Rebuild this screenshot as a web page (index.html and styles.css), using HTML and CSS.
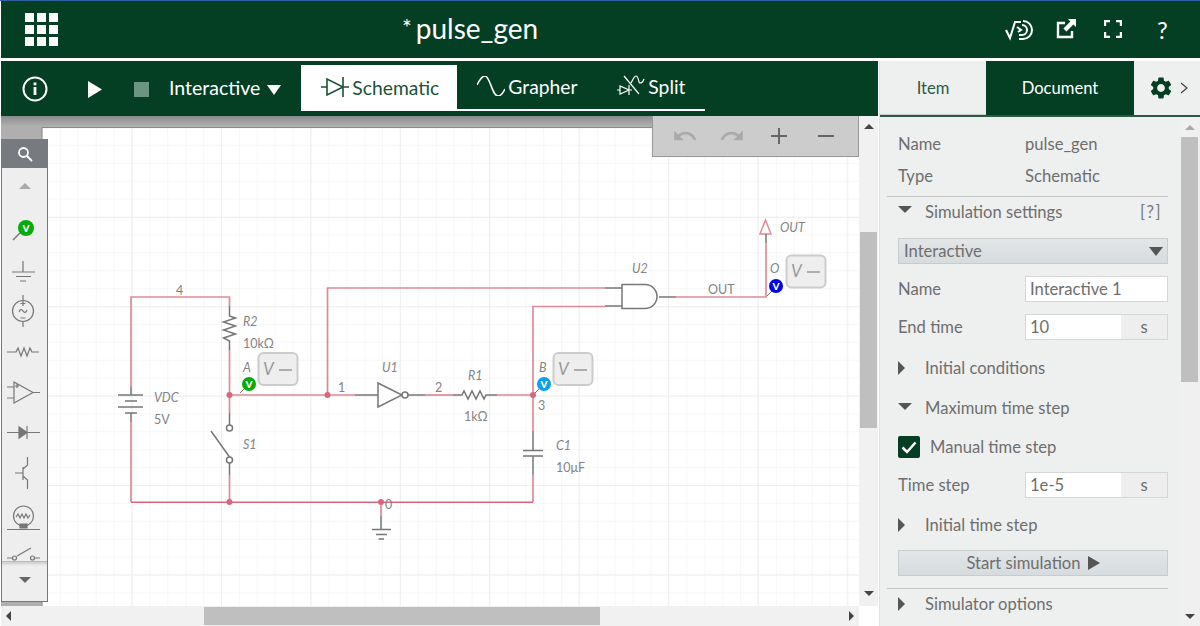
FILE: index.html
```html
<!DOCTYPE html>
<html lang="en">
<head>
  <meta charset="UTF-8">
  <title>pulse_gen</title>
  <link rel="stylesheet" href="styles.css">
</head>
<body>
  <header class="header">
    <div class="apps">
      <i></i><i></i><i></i><i></i><i></i><i></i><i></i><i></i><i></i>
    </div>
    <div class="title"><span class="star">*</span>pulse_gen</div>
    <div class="header-icons">
      <svg class="ico-sim" width="28" height="22" viewBox="0 0 28 22" fill="none" stroke="#fff" stroke-width="2">
        <path d="M1 11l4 8 5-16h6"/>
        <path d="M18 2a9 9 0 1 1 0 18h-4"/>
        <path d="M17 6a5 5 0 1 1 0 10h-3"/>
        <path d="M12 8l4 3-3 2"/>
      </svg>
      <svg class="ico-export" width="20" height="20" viewBox="0 0 20 20" fill="none">
        <path d="M9 4H2v14h14v-6" stroke="#fff" stroke-width="2.4"/>
        <path d="M12 0h8v8l-2.6-2.6-7 7-3-3 7-7z" fill="#fff"/>
      </svg>
      <svg class="ico-full" width="18" height="18" viewBox="0 0 18 18" fill="none" stroke="#fff" stroke-width="2.4">
        <path d="M1 6V1h5M12 1h5v5M17 12v5h-5M6 17H1v-5"/>
      </svg>
      <span class="ico-help">?</span>
    </div>
  </header>

  <div class="main">
    <div class="workspace">
      <nav class="toolbar">
        <svg class="ico-info" width="26" height="26" viewBox="0 0 26 26">
          <circle cx="13" cy="13" r="11.5" fill="none" stroke="#fff" stroke-width="2"/>
          <rect x="11.6" y="11" width="2.8" height="8" fill="#fff"/>
          <rect x="11.6" y="6.5" width="2.8" height="2.8" fill="#fff"/>
        </svg>
        <svg class="ico-play" width="14" height="17" viewBox="0 0 14 17"><path d="M0 0l14 8.5L0 17z" fill="#fff"/></svg>
        <span class="ico-stop"></span>
        <span class="mode">Interactive</span>
        <svg class="mode-arrow" width="14" height="10" viewBox="0 0 14 10"><path d="M0 0h14L7 10z" fill="#fff"/></svg>
        <div class="tabs">
          <div class="tab tab-active">
            <svg width="28" height="20" viewBox="0 0 28 20" fill="none" stroke="#1c5236" stroke-width="1.6">
              <path d="M0 10h6M22 10h6M22 0v20M6 2v16l16-8z"/>
            </svg>
            <span>Schematic</span>
          </div>
          <div class="tab tab-grapher">
            <svg width="28" height="20" viewBox="0 0 28 20" fill="none" stroke="#fff" stroke-width="1.6">
              <path d="M0 9C3 3 5 0 8 0c5 0 7 20 13 20 3 0 5-3 7-7"/>
            </svg>
            <span>Grapher</span>
          </div>
          <div class="tab tab-split">
            <svg width="28" height="22" viewBox="0 0 28 22" fill="none" stroke="#fff" stroke-width="1.2">
              <path d="M0 15h3M13 15h2M3 11v8l9-4zM12 10v10M7 1l15 18M14 8c2-3 3-7 5-7 3 0 2 7 4 7 1 0 3-1 4-4"/>
            </svg>
            <span>Split</span>
          </div>
        </div>
      </nav>

      <div class="canvas-row">
        <div class="canvas">
          <svg class="sheet" width="858" height="490" viewBox="1 116 858 490">
            <defs>
              <pattern id="minor" x="131.5" y="127" width="17.9" height="17.9" patternUnits="userSpaceOnUse">
                <path d="M0 0H17.9M0 0V17.9" stroke="#f0f0f0" fill="none"/>
              </pattern>
              <pattern id="major" x="131.5" y="127.500" width="89.4" height="89.4" patternUnits="userSpaceOnUse">
                <path d="M0 0H89.4M0 0V89.4" stroke="#ececec" stroke-width="1.5" fill="none"/>
              </pattern>
              <linearGradient id="band" x1="0" y1="0" x2="0" y2="1">
                <stop offset="0" stop-color="#8c8c8c"/>
                <stop offset="1" stop-color="#b0aeae"/>
              </linearGradient>
            </defs>
            <rect x="1" y="116" width="858" height="490" fill="#b0aeae"/>
            <rect x="1" y="116" width="858" height="10" fill="url(#band)"/>
            <rect x="42" y="127" width="817" height="479" fill="#fff"/>
            <rect x="42" y="127" width="817" height="479" fill="url(#minor)"/>
            <rect x="42" y="127" width="817" height="479" fill="url(#major)"/>
            <path d="M42 606V127.5H859" fill="none" stroke="#8a8a8a"/>

            <g fill="none" stroke="#dd8b99" stroke-width="1.7">
              <path d="M131 387V297H229.5V306"/>
              <path d="M229.5 350V413"/>
              <path d="M229.5 475V502"/>
              <path d="M131 422V502"/>
              <path d="M229.5 395H355"/>
              <path d="M425 395H453"/>
              <path d="M497 395H533"/>
              <path d="M533 431V306.5H605"/>
              <path d="M327.5 395V288H605"/>
              <path d="M676 297H766V243"/>
              <path d="M533 475V502"/>
              <path d="M381 502V516"/>
              <path d="M765.5 220L760 234H771Z" stroke-width="1.5"/>
            </g>
            <path d="M131 502.3H533" fill="none" stroke="#d9667c" stroke-width="1.5"/>

            <g fill="none" stroke="#777" stroke-width="1.5">
              <path d="M229.5 306V316l6 2-12 4 12 4-12 4 12 4-12 4 6 3V350"/>
              <path d="M131 387V395M118 395H143M125 401H137M118 407H143M125 413H137M131 413V422"/>
              <path d="M229.5 413V425M229.5 463V475M211 431L229.5 457"/>
              <circle cx="229.5" cy="428" r="3" fill="#fff"/>
              <circle cx="229.5" cy="460" r="3" fill="#fff"/>
              <path d="M355 395H378M378 383V407L402 395Z" fill="#fff"/>
              <circle cx="405" cy="395" r="3" fill="#fff"/>
              <path d="M408 395H425"/>
              <path d="M453 395H462l2-4 4 8 4-8 4 8 4-8 4 8 2-4H497"/>
              <path d="M533 431V450M523 450.5H543M523 456H543M533 456V475"/>
              <path d="M381 516V529M372 529.5H391M376 534.5H387M378.5 539H384"/>
              <path d="M605 288H622M605 306H622M622 284.5H645A12 12 0 0 1 645 308.5H622Z" fill="#fff"/>
              <path d="M659 297H676"/>
              <path d="M766 234V243"/>
              <path d="M240 393L245 388M534 394L539 389M767 296L772 291" stroke-width="1"/>
            </g>

            <g fill="#d9667c">
              <circle cx="229.5" cy="395" r="3"/>
              <circle cx="327.5" cy="395" r="3"/>
              <circle cx="533" cy="395" r="3"/>
              <circle cx="229.5" cy="502" r="3"/>
              <circle cx="381" cy="502" r="3"/>
            </g>

            <g class="probe-box">
              <rect x="258.5" y="353" width="39" height="32" rx="5"/>
              <rect x="553.5" y="353" width="39" height="32" rx="5"/>
              <rect x="786.5" y="255.500" width="39" height="32" rx="5"/>
            </g>
            <g class="probe-val">
              <text x="263" y="375" font-style="italic">V</text><path d="M279 370H292"/>
              <text x="558" y="375" font-style="italic">V</text><path d="M574 370H587"/>
              <text x="791" y="277" font-style="italic">V</text><path d="M807 272H820"/>
            </g>

            <circle cx="249" cy="384" r="7" fill="#06ac09"/>
            <circle cx="544" cy="384" r="7" fill="#0ba0e8"/>
            <circle cx="776" cy="286" r="7" fill="#0000ee"/>
            <g class="probe-letter">
              <text x="249" y="387.500">V</text>
              <text x="544" y="387.500">V</text>
              <text x="776" y="289.500">V</text>
            </g>

            <g class="label">
              <text x="176" y="295">4</text>
              <text x="243" y="326" font-style="italic">R2</text>
              <text x="243" y="348">10kΩ</text>
              <text x="243" y="372" font-style="italic">A</text>
              <text x="154" y="402" font-style="italic">VDC</text>
              <text x="154" y="424">5V</text>
              <text x="243" y="449" font-style="italic">S1</text>
              <text x="338" y="392">1</text>
              <text x="435" y="392">2</text>
              <text x="382" y="372" font-style="italic">U1</text>
              <text x="468" y="380" font-style="italic">R1</text>
              <text x="464" y="421">1kΩ</text>
              <text x="539" y="372" font-style="italic">B</text>
              <text x="538" y="410">3</text>
              <text x="556" y="450" font-style="italic">C1</text>
              <text x="556" y="472">10μF</text>
              <text x="385" y="509">0</text>
              <text x="632" y="273" font-style="italic">U2</text>
              <text x="708" y="294">OUT</text>
              <text x="780" y="232" font-style="italic">OUT</text>
              <text x="770" y="273" font-style="italic">O</text>
            </g>
          </svg>

          <aside class="palette">
            <div class="palette-search">
              <svg width="16" height="16" viewBox="0 0 16 16" fill="none" stroke="#fff" stroke-width="1.8">
                <circle cx="6.500" cy="6.500" r="4.500"/><path d="M10 10l5 5"/>
              </svg>
            </div>
            <div class="palette-up"><span class="arrow-up"></span></div>
            <svg class="palette-items" width="45" height="352" viewBox="2 210 45 352" fill="none" stroke="#777" stroke-width="1.2">
              <path d="M14 240L21 233" stroke-width="1.500"/>
              <circle cx="27" cy="228" r="8" fill="#06ac09" stroke="none"/>
              <text class="probe-letter" x="27" y="232" stroke="none">V</text>
              <path d="M24 261V272M13 272H36M17 276.500H32M21 281H27"/>
              <circle cx="24" cy="311" r="10.500"/>
              <path d="M24 295V300.500M24 321.500V327M21.500 303.500H26.500M24 301V306M21.500 318H26.500M20 312c1-3 3-3 4-1s3 2 4-1"/>
              <path d="M8 352H17l2-4 3 8 3-8 3 8 3-8 2 4H40"/>
              <path d="M8 387H15M8 398H15M15 382V403L34 392.500ZM34 392.500H41M16 386H20M18 384V388"/>
              <path d="M8 432.500H41M28 426V439"/>
              <path d="M20 427V438L28 432.500Z" fill="#777"/>
              <path d="M16 473H24M24 467V480M24 469L28.500 465V457M24 476L28.500 480V489"/>
              <circle cx="24.500" cy="516" r="10"/>
              <path d="M17 517l2-3 2 4 2-4 2 4 2-4 2 4 2-3"/>
              <path d="M21 524H28V528H21Z" fill="#777"/>
              <path d="M8 529.500H41"/>
              <path d="M8 558H13M36 558H41M18 556L32 548"/>
              <circle cx="15.500" cy="558" r="2"/>
              <circle cx="33.500" cy="558" r="2"/>
            </svg>
            <div class="palette-down"><span class="arrow-down"></span></div>
          </aside>

          <div class="zoombar">
            <svg width="26" height="26" viewBox="0 0 24 24"><path fill="#aaa" d="M12.5 8c-2.65 0-5.05.99-6.9 2.6L2 7v9h9l-3.62-3.62c1.39-1.16 3.16-1.88 5.12-1.88 3.54 0 6.55 2.31 7.6 5.5l2.37-.78C21.08 11.03 17.15 8 12.5 8z"/></svg>
            <svg width="26" height="26" viewBox="0 0 24 24"><path fill="#aaa" d="M18.4 10.6C16.55 8.99 14.15 8 11.5 8c-4.65 0-8.58 3.03-9.96 7.22L3.9 16c1.05-3.19 4.05-5.5 7.6-5.5 1.95 0 3.73.72 5.12 1.88L13 16h9V7l-3.6 3.6z"/></svg>
            <svg width="26" height="26" viewBox="0 0 26 26"><path stroke="#666" stroke-width="2" d="M5 13H21M13 5V21"/></svg>
            <svg width="26" height="26" viewBox="0 0 26 26"><path stroke="#666" stroke-width="2" d="M5 13H21"/></svg>
          </div>
        </div>

        <div class="vscroll">
          <span class="arrow-up small dark"></span>
          <div class="vthumb"></div>
          <span class="arrow-down small dark"></span>
        </div>
      </div>

      <div class="hscroll">
        <span class="arrow-left"></span>
        <div class="hthumb"></div>
        <span class="arrow-right"></span>
      </div>
    </div>

    <aside class="panel">
      <div class="panel-tabs">
        <div class="ptab ptab-item">Item</div>
        <div class="ptab ptab-doc">Document</div>
        <div class="ptab ptab-gear">
          <svg width="26" height="26" viewBox="0 0 24 24"><path fill="#043f24" d="M19.14 12.94c.04-.3.06-.61.06-.94 0-.32-.02-.64-.07-.94l2.03-1.58c.18-.14.23-.41.12-.61l-1.92-3.32c-.12-.22-.37-.29-.59-.22l-2.39.96c-.5-.38-1.03-.7-1.62-.94l-.36-2.54c-.04-.24-.24-.41-.48-.41h-3.84c-.24 0-.43.17-.47.41l-.36 2.54c-.59.24-1.13.57-1.62.94l-2.39-.96c-.22-.08-.47 0-.59.22L2.74 8.87c-.12.21-.08.47.12.61l2.03 1.58c-.05.3-.09.63-.09.94s.02.64.07.94l-2.03 1.58c-.18.14-.23.41-.12.61l1.92 3.32c.12.22.37.29.59.22l2.39-.96c.5.38 1.03.7 1.62.94l.36 2.54c.05.24.24.41.48.41h3.84c.24 0 .44-.17.47-.41l.36-2.54c.59-.24 1.13-.56 1.62-.94l2.39.96c.22.08.47 0 .59-.22l1.92-3.32c.12-.22.07-.47-.12-.61l-2.01-1.58zM12 15.6c-1.98 0-3.6-1.62-3.6-3.6s1.62-3.6 3.6-3.6 3.6 1.62 3.6 3.6-1.62 3.6-3.6 3.6z"/></svg>
          <svg width="8" height="12" viewBox="0 0 8 12" fill="none" stroke="#444" stroke-width="1.300"><path d="M1 1l6 5-6 5"/></svg>
        </div>
      </div>

      <div class="panel-body">
        <div class="form">
          <div class="row info"><span class="lbl">Name</span><span>pulse_gen</span></div>
          <div class="row info info2"><span class="lbl">Type</span><span>Schematic</span></div>

          <div class="section first">
            <span class="tri-down"></span><span class="sec-title">Simulation settings</span>
            <span class="help">[?]</span>
          </div>
          <div class="select"><span>Interactive</span><span class="tri-sel"></span></div>
          <div class="row field f1"><span class="lbl">Name</span><input class="inp inp-wide" value="Interactive 1"></div>
          <div class="row field f2"><span class="lbl">End time</span><div class="unit-inp"><input class="inp" value="10"><span class="unit">s</span></div></div>

          <div class="section s1"><span class="tri-right"></span><span class="sec-title">Initial conditions</span></div>
          <div class="section s2"><span class="tri-down"></span><span class="sec-title">Maximum time step</span></div>

          <label class="check">
            <span class="box"><svg width="22" height="22" viewBox="0 0 22 22" fill="none" stroke="#fff" stroke-width="2.500"><path d="M4.500 11.500l4.500 4.500 8.500-9.500"/></svg></span>
            <span>Manual time step</span>
          </label>
          <div class="row field f3"><span class="lbl">Time step</span><div class="unit-inp"><input class="inp" value="1e-5"><span class="unit">s</span></div></div>

          <div class="section s3"><span class="tri-right"></span><span class="sec-title">Initial time step</span></div>
          <button class="start">Start simulation <span class="tri-btn"></span></button>

          <div class="section last"><span class="tri-right"></span><span class="sec-title">Simulator options</span></div>
        </div>
        <div class="pscroll">
          <span class="arrow-up small"></span>
          <div class="pthumb"></div>
          <span class="arrow-down small dark"></span>
        </div>
      </div>
    </aside>
  </div>
</body>
</html>
```

FILE: styles.css
```css
* { box-sizing: border-box; }
html, body { margin: 0; height: 626px; overflow: hidden; }
body { font-family: Lato, "Noto Sans", sans-serif; background: #fff; border-top: 1px solid #2f62a0; color: #555; }

.header { height: 57px; margin-left: 1px; background: #043f24; color: #fff; display: flex; align-items: center; }
.apps { display: grid; grid-template-columns: repeat(3, 9px); gap: 3px; margin-left: 24px; }
.apps i { height: 9px; background: #fff; }
.title { font-size: 28px; margin-left: 344px; margin-top: -4px; }
.star { font-size: 23px; vertical-align: 3px; margin-right: 4px; }
.header-icons { display: flex; align-items: center; margin-left: auto; }
.ico-sim { margin-right: 23px; }
.ico-export { margin-right: 28px; margin-top: -2px; }
.ico-full { margin-right: 35px; margin-top: -2px; }
.ico-help { font-size: 24px; width: 43px; margin-top: -1px; }

.main { display: flex; margin-top: 3px; margin-left: 1px; height: 565px; }
.workspace { width: 877px; display: flex; flex-direction: column; }

.toolbar { height: 55px; background: #043f24; color: #fff; display: flex; align-items: center; }
.ico-info { margin-left: 21px; }
.ico-play { margin-left: 40px; margin-top: 1px; }
.ico-stop { width: 15px; height: 15px; background: #6b9580; margin-left: 32px; margin-top: 1px; }
.mode { font-size: 19.5px; margin-left: 20px; margin-top: -3px; }
.mode-arrow { margin-left: 7px; margin-top: 3px; }
.tabs { display: flex; align-self: flex-start; margin-top: 4px; margin-left: 20px; height: 46px; width: 404px; border-bottom: 2px solid #fff; font-size: 19.3px; }
.tab { display: flex; align-items: center; height: 44px; padding-bottom: 2px; }
.tab-active { background: #fff; color: #1c5236; width: 156px; padding-left: 20px; height: 46px; margin-bottom: -2px; gap: 3px; }
.tab-grapher { margin-left: 20px; width: 140px; gap: 3px; }
.tab-split { gap: 3px; }

.canvas-row { display: flex; height: 490px; }
.canvas { width: 858px; position: relative; overflow: hidden; }
.sheet { display: block; }
.label text { font-size: 12.500px; fill: #848484; }
.probe-box rect { fill: #eee; stroke: #ccc; stroke-width: 2; }
.probe-val text { font-size: 17px; fill: #999; }
.probe-val path { stroke: #999; stroke-width: 1.500; }
.probe-letter text, text.probe-letter { font-size: 10px; font-weight: 900; fill: #fff; text-anchor: middle; }

.palette { position: absolute; left: 0; top: 23px; width: 47px; height: 463px; background: #eee; border: 1px solid #777; border-top: 0; display: flex; flex-direction: column; }
.palette-search { height: 29px; margin: 0 -1px; background: #777b80; display: flex; align-items: center; justify-content: center; }
.palette-up { height: 42px; display: flex; justify-content: center; padding-top: 15px; }
.palette-items { flex: none; display: block; margin-left: -1px; height: 352px; margin-top: 0; }
.palette-down { flex: 1; margin-top: -1px; border-top: 1px solid #bbb; display: flex; justify-content: center; padding-top: 15px; background: linear-gradient(#ccc, #eee 4px); }
.arrow-up { width: 0; height: 0; border: 6px solid transparent; border-top: 0; border-bottom: 6px solid #aaa; }
.arrow-down { width: 0; height: 0; border: 6px solid transparent; border-bottom: 0; border-top: 6px solid #666; }
.arrow-up.small, .arrow-down.small { border-width: 5px; }
.arrow-up.small { border-top: 0; }
.arrow-down.small { border-bottom: 0; }
.arrow-up.dark { border-bottom-color: #444; }
.arrow-down.dark { border-top-color: #444; }

.zoombar { position: absolute; right: 0; top: 0; width: 207px; height: 41px; background: #ccc; border: 1px solid #999; border-top: 0; border-right-width: 1px; display: flex; align-items: center; justify-content: space-between; padding: 0 19px; }

.vscroll { width: 19px; background: #f1f1f1; display: flex; flex-direction: column; align-items: center; padding-top: 8px; }
.vthumb { width: 17px; height: 196px; background: #bfbfbf; margin-top: 103px; }
.vscroll .arrow-down { margin-top: 163px; }

.hscroll { height: 20px; width: 858px; background: #f1f1f1; display: flex; align-items: center; position: relative; }
.arrow-left { width: 0; height: 0; border: 5px solid transparent; border-left: 0; border-right: 5px solid #444; margin-left: 5px; }
.hthumb { width: 396px; height: 18px; background: #bfbfbf; margin-left: 193px; }
.arrow-right { width: 0; height: 0; border: 5px solid transparent; border-right: 0; border-left: 5px solid #444; margin-left: auto; margin-right: 5px; }

.panel { width: 321px; margin-left: 1px; background: #eef0ef; border-left: 1px solid #dfe3e8; display: flex; flex-direction: column; }
.panel-tabs { height: 56px; display: flex; border-bottom: 2px solid #2d5a44; font-size: 16.6px; }
.ptab { display: flex; align-items: center; justify-content: center; }
.ptab-item { width: 106px; color: #2d5a44; border-bottom: 1px solid #ccc; }
.ptab-doc { width: 148px; background: #043f24; color: #fff; }
.ptab-gear { flex: 1; gap: 6px; padding-left: 2px; }

.panel-body { flex: 1; display: flex; min-height: 0; }
.form { width: 288px; padding: 0 0 0 7px; font-size: 16.6px; line-height: 22px; color: #6e6e6e; }
.row { display: flex; align-items: center; margin-left: 11px; }
.row .lbl { width: 127px; flex: none; }
.info { height: 22px; margin-top: 16px; }
.info2 { margin-top: 10px; }

.section { display: flex; align-items: center; height: 22px; padding-left: 11px; position: relative; }
.section.first { border-top: 1px solid #c2c2c2; height: 31px; margin-top: 9px; padding-bottom: 1px; width: 281px; }
.sec-title { position: absolute; left: 38px; }
.help { margin-left: auto; margin-right: 6px; color: #777; letter-spacing: 1.5px; }
.tri-down { width: 0; height: 0; border: 7px solid transparent; border-bottom: 0; border-top: 7px solid #555; margin-top: -4px; }
.tri-right { width: 0; height: 0; border: 7px solid transparent; border-right: 0; border-left: 7px solid #555; }

.select { width: 270px; height: 26px; margin: 11px 0 0 11px; padding: 0 5px; background: linear-gradient(#e3e6e7, #d6dbde); border: 1px solid #c8cccc; display: flex; align-items: center; justify-content: space-between; }
.tri-sel { width: 0; height: 0; border: 7px solid transparent; border-bottom: 0; border-top: 9px solid #555; margin-right: -1px; }

.field { height: 26px; }
.f1 { margin-top: 12px; }
.f2 { margin-top: 12px; }
.f3 { margin-top: 13px; }
.inp { font: inherit; color: #6e6e6e; background: #fff; border: 0; padding: 0 4px; height: 100%; width: 95px; outline: none; }
.inp-wide { width: 143px; height: 26px; border: 1px solid #d6d6d6; }
.unit-inp { display: flex; width: 143px; height: 26px; border: 1px solid #d6d6d6; }
.unit { flex: 1; text-align: center; background: #eee; line-height: 24px; }

.s1 { margin-top: 17px; }
.s2 { margin-top: 18px; }
.check { display: flex; align-items: center; gap: 10px; margin: 16px 0 0 11px; height: 24px; }
.box { width: 22px; height: 22px; background: #043f24; border-radius: 2px; display: block; }
.box svg { display: block; }
.s3 { margin-top: 16px; }

.start { font: inherit; color: #6e6e6e; display: flex; align-items: center; justify-content: center; gap: 7px; width: 270px; height: 26px; margin: 14px 0 0 11px; padding: 0; background: linear-gradient(#e3e6e7, #d6dbde); border: 1px solid #c8cccc; }
.tri-btn { width: 0; height: 0; border: 7px solid transparent; border-right: 0; border-left: 12px solid #555; }
.section.last { border-top: 1px solid #c2c2c2; height: 30px; margin-top: 12px; width: 281px; }

.pscroll { width: 19px; margin-left: 12px; background: #f0f0f0; display: flex; flex-direction: column; align-items: center; padding-top: 8px; }
.pthumb { width: 17px; height: 245px; background: #bfbfbf; margin-top: 7px; }
.pscroll .arrow-down { margin-top: 232px; }
```
